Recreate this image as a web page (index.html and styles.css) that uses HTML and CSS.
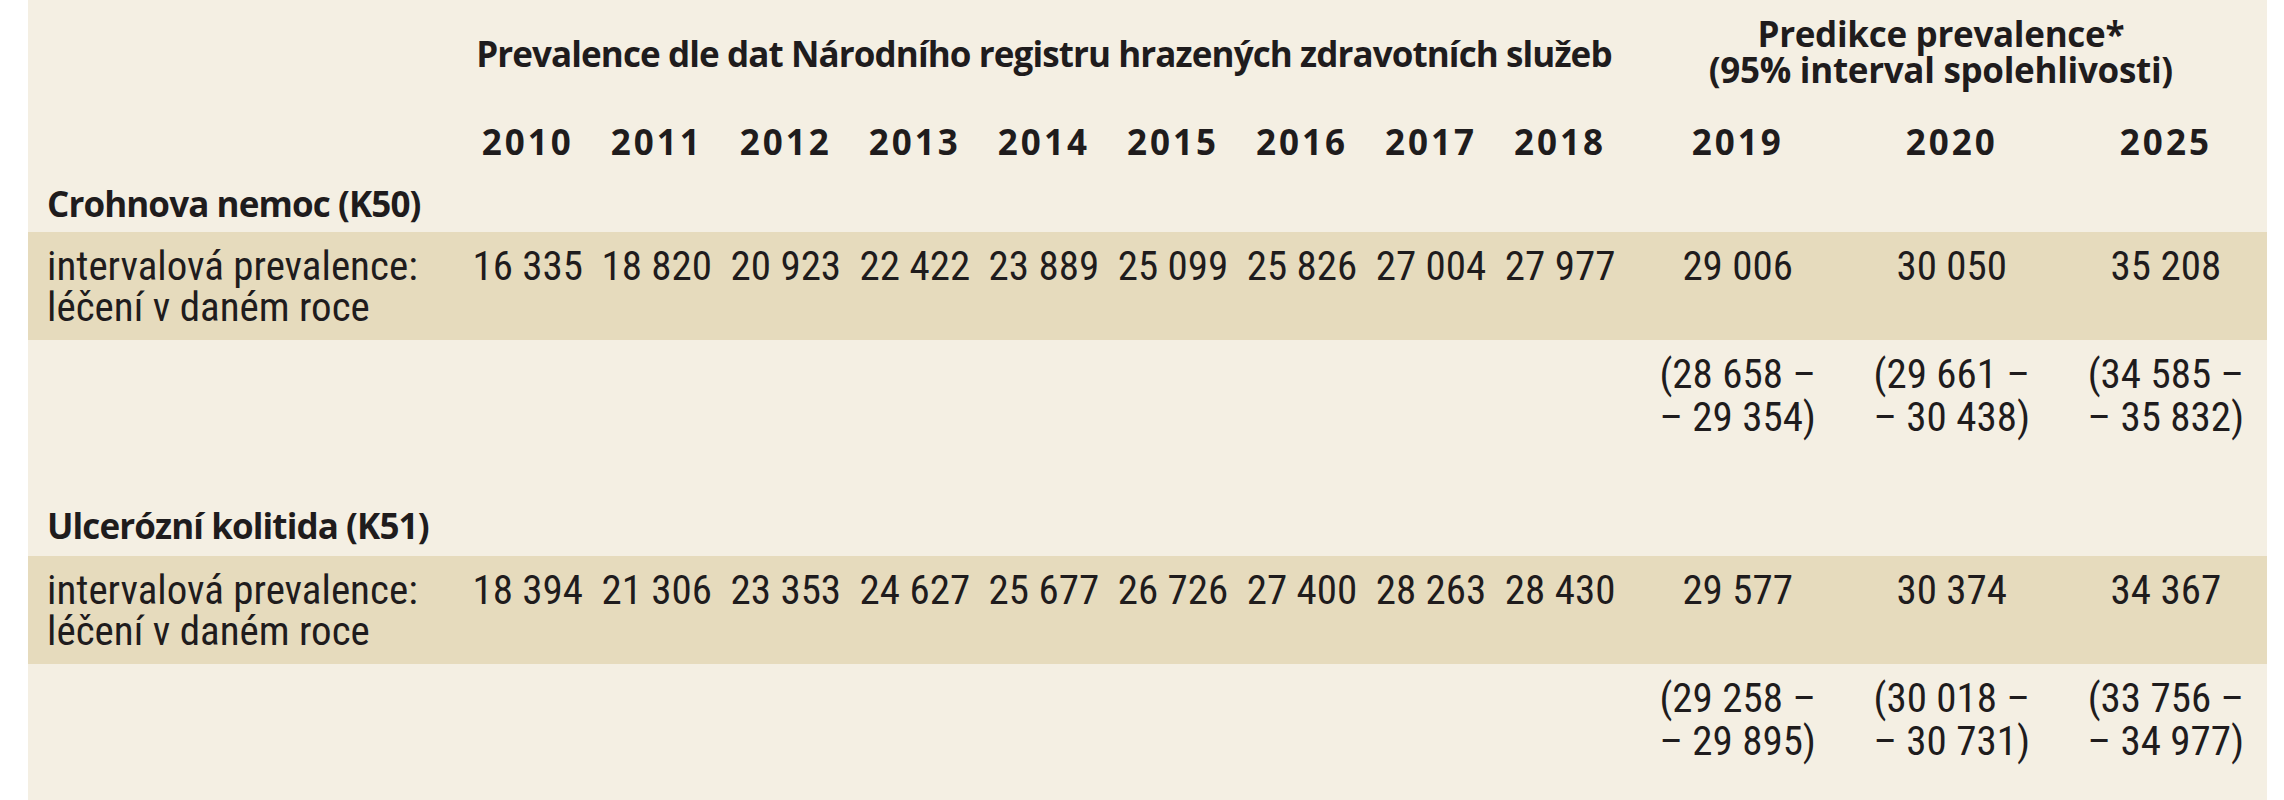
FILE: index.html
```html
<!DOCTYPE html>
<html lang="cs">
<head>
<meta charset="utf-8">
<title>Prevalence IBD</title>
<link rel="stylesheet" href="styles.css">
</head>
<body>
<div class="page">
<table class="prev">
  <colgroup>
    <col class="c-label">
    <col class="c-year"><col class="c-year"><col class="c-year"><col class="c-year"><col class="c-year"><col class="c-year"><col class="c-year"><col class="c-year"><col class="c-year">
    <col class="c-pred"><col class="c-pred"><col class="c-pred">
  </colgroup>
  <thead>
    <tr class="r-group">
      <th></th>
      <th colspan="9" class="g-reg">Prevalence dle dat Národního registru hrazených zdravotních služeb</th>
      <th colspan="3" class="g-pred">Predikce prevalence*<br>(95% interval spolehlivosti)</th>
    </tr>
    <tr class="r-years">
      <th></th>
      <th>2010</th><th>2011</th><th>2012</th><th>2013</th><th>2014</th><th>2015</th><th>2016</th><th>2017</th><th>2018</th>
      <th class="p">2019</th><th class="p">2020</th><th class="p">2025</th>
    </tr>
  </thead>
  <tbody>
    <tr class="r-section"><th colspan="13">Crohnova nemoc (K50)</th></tr>
    <tr class="r-band">
      <td class="lbl">intervalová prevalence:<br>léčení v daném roce</td>
      <td>16 335</td><td>18 820</td><td>20 923</td><td>22 422</td><td>23 889</td><td>25 099</td><td>25 826</td><td>27 004</td><td>27 977</td>
      <td class="p">29 006</td><td class="p">30 050</td><td class="p">35 208</td>
    </tr>
    <tr class="r-ci">
      <td></td>
      <td></td><td></td><td></td><td></td><td></td><td></td><td></td><td></td><td></td>
      <td class="p">(28 658 –<br>– 29 354)</td><td class="p">(29 661 –<br>– 30 438)</td><td class="p">(34 585 –<br>– 35 832)</td>
    </tr>
    <tr class="r-section r-second"><th colspan="13">Ulcerózní kolitida (K51)</th></tr>
    <tr class="r-band">
      <td class="lbl">intervalová prevalence:<br>léčení v daném roce</td>
      <td>18 394</td><td>21 306</td><td>23 353</td><td>24 627</td><td>25 677</td><td>26 726</td><td>27 400</td><td>28 263</td><td>28 430</td>
      <td class="p">29 577</td><td class="p">30 374</td><td class="p">34 367</td>
    </tr>
    <tr class="r-ci">
      <td></td>
      <td></td><td></td><td></td><td></td><td></td><td></td><td></td><td></td><td></td>
      <td class="p">(29 258 –<br>– 29 895)</td><td class="p">(30 018 –<br>– 30 731)</td><td class="p">(33 756 –<br>– 34 977)</td>
    </tr>
  </tbody>
</table>
</div>
</body>
</html>
```

FILE: styles.css
```css
html, body {
  margin: 0;
  padding: 0;
  background: #ffffff;
}

.page {
  padding-left: 28px;
  height: 800px;
  overflow: hidden;
}

.prev {
  width: 2239px;
  table-layout: fixed;
  border-collapse: collapse;
  border-spacing: 0;
  background: #f4efe3;
  color: #1f1c1d;
  font-family: Roboto, "Open Sans", "Liberation Sans", sans-serif;
  font-stretch: 75%;
  font-size: 41px;
  line-height: 41px;
}

.c-label { width: 435px; }
.c-year { width: 129px; }
.c-pred { width: 214px; }

.prev th,
.prev td {
  padding: 0;
  text-align: center;
  vertical-align: top;
  font-weight: normal;
  white-space: nowrap;
}

.prev th {
  font-family: "Open Sans", "Liberation Sans", sans-serif;
  font-weight: 700;
  font-stretch: 100%;
  font-size: 35px;
  letter-spacing: -0.9px;
}

.prev .p {
  padding-left: 12px;
}

/* header group row */
.r-group th {
  height: 108px;
  vertical-align: middle;
  line-height: 36px;
}
.r-group .g-pred {
  height: 104px;
  padding-right: 10px;
  padding-bottom: 4px;
  letter-spacing: -0.3px;
}

/* years */
.r-years th {
  height: 67px;
  vertical-align: middle;
  line-height: 40px;
  letter-spacing: 3px;
}

/* section titles */
.r-section th {
  height: 57px;
  text-align: left;
  vertical-align: middle;
  padding-left: 19px;
  line-height: 40px;
}
.r-second th {
  height: 60px;
}

/* shaded data row */
.r-band td {
  background: #e6dbbd;
  height: 82px;
  padding-top: 14px;
  padding-bottom: 12px;
}
.r-band .lbl {
  text-align: left;
  padding-left: 19px;
}

/* confidence interval row */
.r-ci td {
  height: 143px;
  padding-top: 13px;
  line-height: 43px;
}
```
